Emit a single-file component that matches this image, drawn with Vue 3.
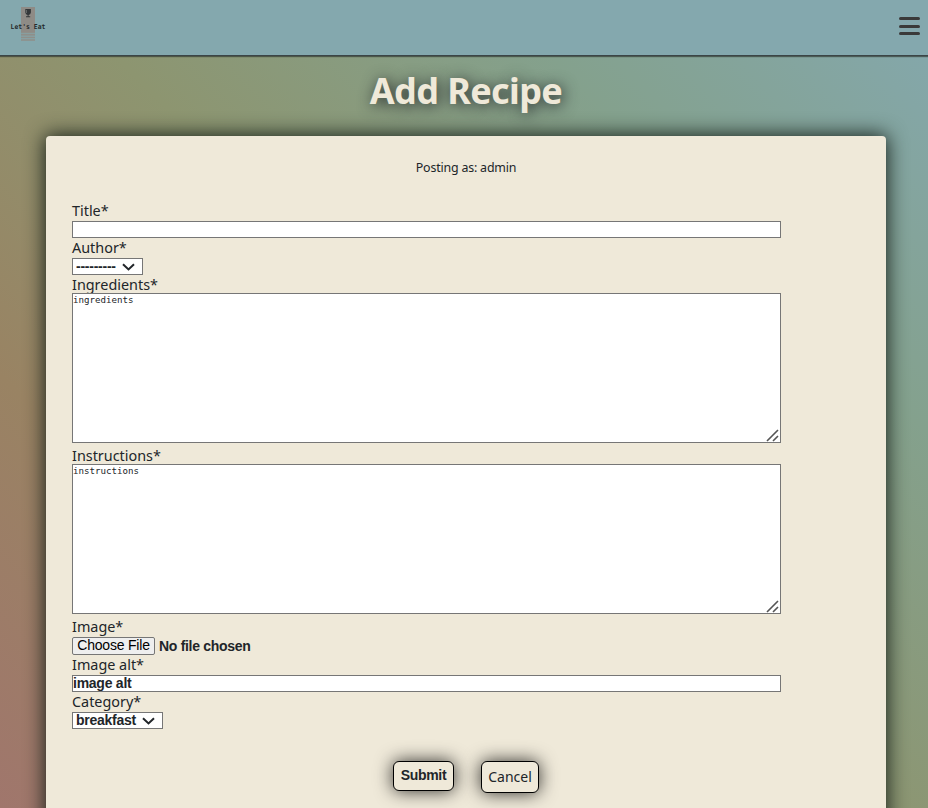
<script setup>
import { ref } from 'vue'

const title = ref('')
const author = ref('')
const ingredients = ref('ingredients')
const instructions = ref('instructions')
const imageAlt = ref('image alt')
const category = ref('breakfast')
</script>

<template>
  <div class="page">
    <header class="navbar">
      <svg class="logo" width="36" height="36" viewBox="0 0 36 36">
        <rect x="11" y="1" width="14" height="25" fill="#8e8b86" />
        <g fill="#8e8f8a">
          <rect x="11" y="26" width="14" height="1.4" />
          <rect x="11" y="28" width="14" height="1.7" />
          <rect x="11" y="30.6" width="14" height="1.7" />
          <rect x="11" y="33.2" width="14" height="1.6" />
        </g>
        <path d="M15.3 3h5.6v3.4q-.3 2.4-2.3 2.7v1.2h1.6v.9h-4.2v-.9h1.6V9.1q-2-.3-2.3-2.7z" fill="#34383a" />
        <path d="M16.5 4v3" stroke="#858987" stroke-width=".6" />
        <text x="0.6" y="23" textLength="34.8" lengthAdjust="spacingAndGlyphs" class="logo-text">Let's Eat</text>
      </svg>
      <button class="menu" aria-label="Menu">
        <span></span><span></span><span></span>
      </button>
    </header>

    <main>
      <h1>Add Recipe</h1>
      <section class="card">
        <p class="posting">Posting as: admin</p>
        <form @submit.prevent>
          <label for="title">Title*</label>
          <input id="title" v-model="title" class="text" type="text" />

          <label for="author">Author*</label>
          <div class="select author">
            <select id="author" v-model="author"><option value="">---------</option></select>
            <svg width="13" height="8" viewBox="0 0 13 8"><path d="M1 1.2l5.5 5.2L12 1.2" /></svg>
          </div>

          <label for="ingredients" class="tight">Ingredients*</label>
          <div class="area">
            <textarea id="ingredients" v-model="ingredients"></textarea>
            <svg width="13" height="13" viewBox="0 0 13 13"><path d="M1 12L12 1M7 12l5-5" /></svg>
          </div>

          <label for="instructions" class="tight">Instructions*</label>
          <div class="area">
            <textarea id="instructions" v-model="instructions"></textarea>
            <svg width="13" height="13" viewBox="0 0 13 13"><path d="M1 12L12 1M7 12l5-5" /></svg>
          </div>

          <label>Image*</label>
          <div class="file">
            <button type="button">Choose File</button>
            <span>No file chosen</span>
          </div>

          <label for="alt">Image alt*</label>
          <input id="alt" v-model="imageAlt" class="text" type="text" />

          <label for="category">Category*</label>
          <div class="select category">
            <select id="category" v-model="category"><option>breakfast</option></select>
            <svg width="13" height="8" viewBox="0 0 13 8"><path d="M1 1.2l5.5 5.2L12 1.2" /></svg>
          </div>

          <div class="actions">
            <button class="submit">Submit</button>
            <a class="cancel">Cancel</a>
          </div>
        </form>
      </section>
    </main>
  </div>
</template>

<style>
body {
  overflow: hidden;
}
</style>

<style scoped>
* {
  box-sizing: border-box;
}
.page {
  height: 808px;
  overflow: hidden;
  background: linear-gradient(45deg, #a0766c 0%, #998363 25%, #8d9570 50%, #84a18d 75%, #84a8ae 100%);
  color: #212529;
  font-family: "Noto Sans", "Open Sans", sans-serif;
}
.navbar {
  height: 56px;
  padding: 6px 8.5px 0 10px;
  display: flex;
  justify-content: space-between;
  align-items: flex-start;
  background: #84a8ae;
  border-bottom: 1px solid #3b4547;
  box-shadow: 0 1px 1px rgba(45, 50, 45, 0.65);
}
.logo-text {
  font: bold 6.8px "DejaVu Sans Mono", monospace;
  fill: #24292b;
}
.menu {
  display: flex;
  flex-direction: column;
  gap: 4.5px;
  width: 21px;
  margin-top: 11px;
  padding: 0;
  border: 0;
  background: none;
}
.menu span {
  width: 21px;
  height: 3px;
  border-radius: 1.5px;
  background: #3a3a3a;
}
h1 {
  height: 80px;
  margin: 0;
  padding-left: 4px;
  text-align: center;
  font-size: 36px;
  line-height: 70px;
  font-weight: 700;
  letter-spacing: -0.6px;
  color: #efe9d9;
  text-shadow: 2px 2px 15px #212529;
}
.card {
  width: 840px;
  height: 720px;
  margin-left: 46px;
  padding: 20px 26px;
  border-radius: 4px;
  background: #efe9d9;
  box-shadow: 0 0 20px 1px #16201a;
}
.posting {
  height: 45px;
  margin: 0;
  text-align: center;
  font-size: 12.4px;
  letter-spacing: -0.18px;
  line-height: 23px;
}
form {
  display: flex;
  flex-direction: column;
  align-items: flex-start;
}
label {
  height: 20px;
  line-height: 20px;
  font-size: 14.4px;
}
label.tight {
  height: 18px;
}
input,
select,
textarea {
  display: block;
  margin: 0;
  border: 1px solid #767676;
  border-radius: 0;
  outline: 0;
  background: #fff;
  color: #212529;
}
.text,
select {
  height: 17px;
  font: bold 14px/15px "Liberation Sans", Arial, sans-serif;
  letter-spacing: -0.25px;
}
.text {
  width: 709px;
  padding: 0 0 1px 0;
}
.select,
.area {
  position: relative;
}
select {
  width: 100%;
  padding: 0 0 0 3px;
  appearance: none;
}
.author {
  width: 71px;
}
.category {
  width: 91px;
}
.select svg {
  position: absolute;
  right: 8px;
  top: 5px;
}
.select svg path {
  fill: none;
  stroke: #212529;
  stroke-width: 2;
}
.area {
  margin-bottom: 3px;
}
textarea {
  width: 709px;
  height: 150px;
  padding: 0;
  resize: none;
  font: 9.13px/12px "DejaVu Sans Mono", monospace;
}
.area svg {
  position: absolute;
  right: 2px;
  bottom: 1px;
}
.area svg path {
  fill: none;
  stroke: #555;
  stroke-width: 1.6;
}
.file {
  display: flex;
  align-items: center;
  gap: 4px;
  height: 18px;
  font: bold 14px/18px "Liberation Sans", Arial, sans-serif;
  letter-spacing: -0.3px;
}
.file button {
  width: 83px;
  height: 18px;
  padding: 0 0 1px;
  border: 1px solid #767676;
  border-radius: 2px;
  background: #efefef;
  color: #000;
  font: 14px/15px "Liberation Sans", Arial, sans-serif;
  letter-spacing: -0.2px;
}
.actions {
  align-self: center;
  display: flex;
  align-items: flex-start;
  gap: 27px;
  margin-top: 32px;
}
.submit,
.cancel {
  padding: 0;
  text-align: center;
  border: 1px solid #000;
  border-radius: 6px;
  background: #efe9d9;
  color: #212529;
  box-shadow: 0 0 18px rgba(0, 0, 0, 0.8);
}
.submit {
  width: 61px;
  height: 30px;
  padding-bottom: 1px;
  font: bold 14px/27px "Liberation Sans", Arial, sans-serif;
  letter-spacing: -0.3px;
}
.cancel {
  width: 58px;
  height: 32px;
  font-size: 14px;
  line-height: 30px;
}
</style>
